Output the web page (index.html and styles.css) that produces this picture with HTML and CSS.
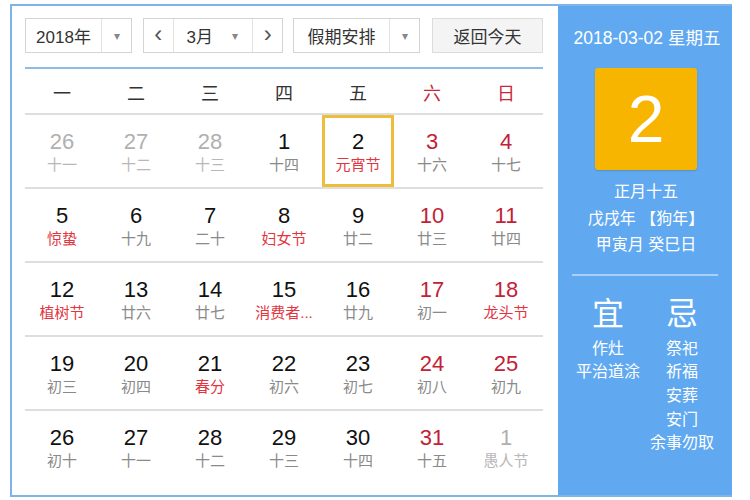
FILE: index.html
```html
<!DOCTYPE html>
<html>
<head>
<meta charset="utf-8">
<link rel="stylesheet" href="styles.css">
</head>
<body>
<div class="cal">
  <div class="main">
    <div class="toolbar">
      <div class="sel year"><span class="txt">2018年</span><span class="arr">▾</span></div>
      <div class="sel month">
        <span class="nav">‹</span>
        <span class="mtxt">3月<span class="arr2">▾</span></span>
        <span class="nav nav-r">›</span>
      </div>
      <div class="sel hol"><span class="txt">假期安排</span><span class="arr">▾</span></div>
      <div class="today">返回今天</div>
    </div>
    <div class="weekdays">
      <span>一</span><span>二</span><span>三</span><span>四</span><span>五</span><span class="red">六</span><span class="red">日</span>
    </div>
    <div class="grid">
      <div class="cell other"><b>26</b><i>十一</i></div>
      <div class="cell other"><b>27</b><i>十二</i></div>
      <div class="cell other"><b>28</b><i>十三</i></div>
      <div class="cell"><b>1</b><i>十四</i></div>
      <div class="cell sel-day"><b>2</b><i class="fest">元宵节</i></div>
      <div class="cell we"><b>3</b><i>十六</i></div>
      <div class="cell we"><b>4</b><i>十七</i></div>

      <div class="cell"><b>5</b><i class="fest">惊蛰</i></div>
      <div class="cell"><b>6</b><i>十九</i></div>
      <div class="cell"><b>7</b><i>二十</i></div>
      <div class="cell"><b>8</b><i class="fest">妇女节</i></div>
      <div class="cell"><b>9</b><i>廿二</i></div>
      <div class="cell we"><b>10</b><i>廿三</i></div>
      <div class="cell we"><b>11</b><i>廿四</i></div>

      <div class="cell"><b>12</b><i class="fest">植树节</i></div>
      <div class="cell"><b>13</b><i>廿六</i></div>
      <div class="cell"><b>14</b><i>廿七</i></div>
      <div class="cell"><b>15</b><i class="fest">消费者...</i></div>
      <div class="cell"><b>16</b><i>廿九</i></div>
      <div class="cell we"><b>17</b><i>初一</i></div>
      <div class="cell we"><b>18</b><i class="fest">龙头节</i></div>

      <div class="cell"><b>19</b><i>初三</i></div>
      <div class="cell"><b>20</b><i>初四</i></div>
      <div class="cell"><b>21</b><i class="fest">春分</i></div>
      <div class="cell"><b>22</b><i>初六</i></div>
      <div class="cell"><b>23</b><i>初七</i></div>
      <div class="cell we"><b>24</b><i>初八</i></div>
      <div class="cell we"><b>25</b><i>初九</i></div>

      <div class="cell"><b>26</b><i>初十</i></div>
      <div class="cell"><b>27</b><i>十一</i></div>
      <div class="cell"><b>28</b><i>十二</i></div>
      <div class="cell"><b>29</b><i>十三</i></div>
      <div class="cell"><b>30</b><i>十四</i></div>
      <div class="cell we"><b>31</b><i>十五</i></div>
      <div class="cell other"><b>1</b><i>愚人节</i></div>
    </div>
  </div>
  <div class="side">
    <div class="date">2018-03-02 星期五</div>
    <div class="big">2</div>
    <div class="lunar">
      <div>正月十五</div>
      <div>戊戌年 【狗年】</div>
      <div>甲寅月 癸巳日</div>
    </div>
    <div class="sep"></div>
    <div class="yiji">
      <div class="col">
        <div class="head">宜</div>
        <div>作灶</div>
        <div>平治道涂</div>
      </div>
      <div class="col">
        <div class="head">忌</div>
        <div>祭祀</div>
        <div>祈福</div>
        <div>安葬</div>
        <div>安门</div>
        <div>余事勿取</div>
      </div>
    </div>
  </div>
</div>
</body>
</html>
```
FILE: styles.css
```css
* { box-sizing: border-box; margin: 0; padding: 0; }
html, body { background: #fff; }
body {
  width: 750px;
  height: 500px;
  overflow: hidden;
  font-family: "Liberation Sans", "Noto Sans CJK SC", sans-serif;
  padding: 4px 0 0 10px;
}
.cal {
  width: 722px;
  height: 493px;
  border: 2px solid #7fb4e8;
  border-right: none;
  display: flex;
}
.main {
  width: 546px;
  padding: 12px 15px 0 13px;
}
.toolbar {
  display: flex;
  height: 35px;
}
.sel {
  display: flex;
  align-items: stretch;
  border: 1px solid #d4d4d4;
  background: #fff;
  color: #333;
  font-size: 17px;
}
.sel .txt {
  display: flex;
  align-items: center;
  justify-content: center;
  border-right: 1px solid #e2e2e2;
}
.sel .arr {
  display: flex;
  align-items: center;
  justify-content: center;
  color: #888;
  font-size: 12px;
  flex: 1;
}
.year { width: 107px; }
.year .txt { width: 76px; }
.month { width: 140px; margin-left: 11px; }
.nav {
  width: 30px;
  display: flex;
  align-items: center;
  justify-content: center;
  font-size: 24px;
  color: #555;
  border-right: 1px solid #e2e2e2;
  line-height: 1;
  padding-bottom: 3px;
}
.nav-r { border-right: none; border-left: 1px solid #e2e2e2; }
.mtxt {
  width: 80px;
  display: flex;
  align-items: center;
  padding-left: 13px;
}
.arr2 { color: #888; font-size: 12px; margin-left: 19px; }
.hol { width: 127px; margin-left: 10px; }
.hol .txt { width: 96px; }
.today {
  width: 111px;
  margin-left: 12px;
  border: 1px solid #dcdcdc;
  background: #f4f4f4;
  color: #333;
  font-size: 17px;
  display: flex;
  align-items: center;
  justify-content: center;
}
.weekdays {
  margin-top: 14px;
  border-top: 2px solid #8dbce9;
  display: grid;
  grid-template-columns: repeat(7, 1fr);
  height: 46px;
  padding-top: 3px;
}
.weekdays span {
  text-align: center;
  line-height: 44px;
  font-size: 18px;
  color: #333;
}
.weekdays .red { color: #c9283a; }
.grid {
  display: grid;
  grid-template-columns: repeat(7, 1fr);
  grid-auto-rows: 74px;
}
.cell {
  border-top: 2px solid #dedede;
  display: flex;
  flex-direction: column;
  align-items: center;
  padding-top: 15px;
  position: relative;
}
.cell b {
  font-weight: normal;
  font-size: 22px;
  line-height: 24px;
  color: #111;
}
.cell i {
  font-style: normal;
  font-size: 15px;
  line-height: 22px;
  color: #8a8a8a;
  white-space: nowrap;
}
.cell i.fest { color: #e2353f; }
.cell.we b { color: #c32236; }
.cell.other b { color: #b0b0b0; }
.cell.other i { color: #b8b8b8; }
.cell.sel-day::after {
  content: "";
  position: absolute;
  left: 1px; right: 1px; top: 0; bottom: 0;
  border: 3px solid #efbd3c;
}
.side {
  width: 174px;
  background: #60a9f1;
  color: #fff;
  display: flex;
  flex-direction: column;
  align-items: center;
  padding-top: 21px;
}
.date {
  font-size: 17.5px;
  line-height: 22px;
  margin-left: 4px;
  white-space: nowrap;
}
.big {
  margin-top: 19px;
  width: 102px;
  height: 102px;
  background: #f8b500;
  border-radius: 3px;
  box-shadow: 0 1px 2px rgba(0,0,0,0.15);
  font-size: 66px;
  line-height: 102px;
  text-align: center;
  margin-left: 2px;
}
.lunar {
  margin-top: 9px;
  text-align: center;
  font-size: 16px;
  line-height: 26.5px;
  margin-left: 2px;
}
.sep {
  margin-top: 15px;
  width: 146px;
  height: 2px;
  background: #a9d0f6;
}
.yiji {
  display: flex;
  margin-top: 20px;
}
.col {
  width: 74px;
  text-align: center;
  font-size: 16px;
  line-height: 23.7px;
}
.col .head {
  font-size: 32px;
  line-height: 36px;
  margin-bottom: 5px;
}
```
